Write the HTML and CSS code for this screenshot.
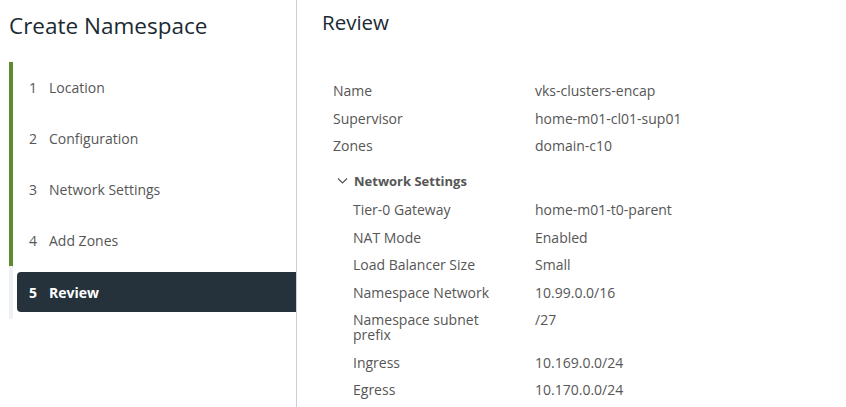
FILE: index.html
```html
<!DOCTYPE html>
<html>
<head>
<meta charset="utf-8">
<link rel="stylesheet" href="styles.css">
</head>
<body>
<div class="wizard">
  <aside class="side">
    <h1 class="title">Create Namespace</h1>
    <nav class="steps">
      <div class="step done"><span class="num">1</span><span class="lbl">Location</span></div>
      <div class="step done"><span class="num">2</span><span class="lbl">Configuration</span></div>
      <div class="step done"><span class="num">3</span><span class="lbl">Network Settings</span></div>
      <div class="step done"><span class="num">4</span><span class="lbl">Add Zones</span></div>
      <div class="step current"><div class="pill"><span class="num">5</span><span class="lbl">Review</span></div></div>
    </nav>
  </aside>
  <main class="content">
    <h2 class="heading">Review</h2>
    <div class="review">
      <div class="row"><span class="k">Name</span><span class="v">vks-clusters-encap</span></div>
      <div class="row"><span class="k">Supervisor</span><span class="v">home-m01-cl01-sup01</span></div>
      <div class="row"><span class="k">Zones</span><span class="v">domain-c10</span></div>
      <div class="section">
        <svg class="chev" width="11" height="8" viewBox="0 0 11 8"><path d="M1 1.5 L5.5 6 L10 1.5" fill="none" stroke="#565656" stroke-width="1.2"/></svg>
        <span>Network Settings</span>
      </div>
      <div class="sub">
        <div class="row"><span class="k">Tier-0 Gateway</span><span class="v">home-m01-t0-parent</span></div>
        <div class="row"><span class="k">NAT Mode</span><span class="v">Enabled</span></div>
        <div class="row"><span class="k">Load Balancer Size</span><span class="v">Small</span></div>
        <div class="row"><span class="k">Namespace Network</span><span class="v">10.99.0.0/16</span></div>
        <div class="row"><span class="k">Namespace subnet prefix</span><span class="v">/27</span></div>
        <div class="row"><span class="k">Ingress</span><span class="v">10.169.0.0/24</span></div>
        <div class="row"><span class="k">Egress</span><span class="v">10.170.0.0/24</span></div>
      </div>
    </div>
  </main>
</div>
</body>
</html>
```

FILE: styles.css
```css
* { box-sizing: border-box; }
html, body { margin: 0; padding: 0; background: #fff; }
body { font-family: "Open Sans", "Lato", sans-serif; color: #565656; width: 846px; height: 407px; overflow: hidden; }

.wizard { display: flex; height: 407px; }
.side { width: 297px; border-right: 1px solid #c9d0d5; flex: none; }
.title { margin: 0; padding: 12px 0 0 9px; font-size: 22.5px; font-weight: 400; color: #1b2a32; line-height: 28px; height: 62px; }

.steps { margin-left: 9px; border-left: 4px solid #eef2f6; }
.step { height: 51px; display: flex; align-items: center; font-size: 14px; color: #565656; }
.step.done { border-left: 4px solid #5d8b2f; margin-left: -4px; }
.step .num { width: 20px; padding-left: 16px; box-sizing: content-box; }
.step.current { height: 53px; align-items: flex-start; padding-top: 6px; }
.pill { margin-left: 4px; width: 279px; height: 40px; background: #25323b; border-radius: 4px 0 0 4px; display: flex; align-items: center; color: #fff; font-weight: 700; }
.pill .num { padding-left: 12px; width: 20px; }

.content { flex: 1; padding-left: 25px; }
.heading { margin: 0; padding-top: 9px; font-size: 20.5px; font-weight: 400; color: #1b2a32; line-height: 26px; height: 83px; }
.review { padding-left: 11px; font-size: 14px; }
.row { display: flex; line-height: 15px; margin-bottom: 12.5px; color: #565656; }
.k { width: 202px; flex: none; }
.sub { padding-left: 20px; }
.sub .k { width: 182px; padding-right: 40px; }
.section { display: flex; align-items: center; gap: 6px; font-size: 13px; font-weight: 700; height: 15px; margin: 20px 0 14px 4px; color: #565656; }
```
